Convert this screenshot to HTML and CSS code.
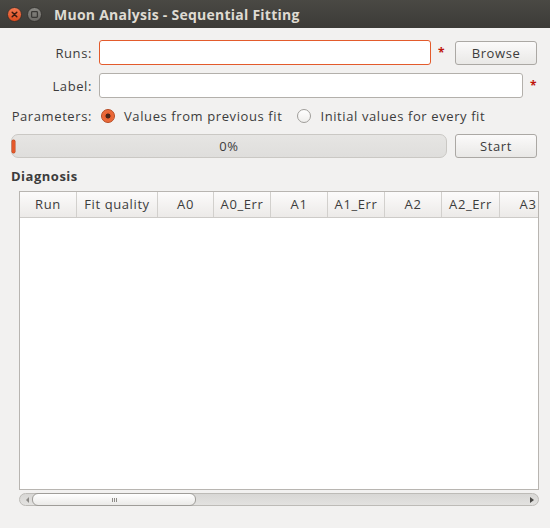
FILE: index.html
```html
<!DOCTYPE html>
<html>
<head>
<meta charset="utf-8">
<link rel="stylesheet" href="styles.css">
</head>
<body>
<div class="titlebar">
  <svg class="wbtn" width="15" height="15" viewBox="0 0 15 15">
    <defs>
      <linearGradient id="gc" x1="0" y1="0" x2="0" y2="1">
        <stop offset="0" stop-color="#f47a52"/>
        <stop offset="1" stop-color="#dd4a1c"/>
      </linearGradient>
    </defs>
    <circle cx="7.5" cy="7.5" r="7" fill="url(#gc)" stroke="#2d2c29" stroke-width="0.8"/>
    <path d="M5.2 5.2 L9.8 9.8 M9.8 5.2 L5.2 9.8" stroke="#3a1a10" stroke-width="1.5" stroke-linecap="round"/>
  </svg>
  <svg class="wbtn wmax" width="15" height="15" viewBox="0 0 15 15">
    <defs>
      <linearGradient id="gm" x1="0" y1="0" x2="0" y2="1">
        <stop offset="0" stop-color="#8a8984"/>
        <stop offset="1" stop-color="#6a6965"/>
      </linearGradient>
    </defs>
    <circle cx="7.5" cy="7.5" r="7" fill="url(#gm)" stroke="#2d2c29" stroke-width="0.8"/>
    <rect x="4.6" y="4.6" width="5.8" height="5.8" rx="0.8" fill="none" stroke="#3a3936" stroke-width="1.3"/>
  </svg>
  <span class="title">Muon Analysis - Sequential Fitting</span>
</div>

<div class="content">
  <div class="row r-runs">
    <span class="lbl">Runs:</span>
    <div class="input focus"></div>
    <span class="req">*</span>
    <button class="btn btn-browse">Browse</button>
  </div>
  <div class="row r-label">
    <span class="lbl">Label:</span>
    <div class="input"></div>
    <span class="req">*</span>
  </div>
  <div class="row r-params">
    <span class="lbl">Parameters:</span>
    <span class="radio checked"></span>
    <span class="rtext">Values from previous fit</span>
    <span class="radio second"></span>
    <span class="rtext">Initial values for every fit</span>
  </div>
  <div class="row r-progress">
    <div class="progress">
      <span class="chunk"></span>
      <span class="ptext">0%</span>
    </div>
    <button class="btn btn-start">Start</button>
  </div>

  <div class="group">
    <div class="group-title">Diagnosis</div>
    <div class="table">
      <div class="thead">
        <span class="th w57">Run</span>
        <span class="th w81">Fit quality</span>
        <span class="th w56">A0</span>
        <span class="th w57">A0_Err</span>
        <span class="th w57">A1</span>
        <span class="th w57">A1_Err</span>
        <span class="th w57">A2</span>
        <span class="th w58">A2_Err</span>
        <span class="th w57">A3</span>
      </div>
      <div class="tbody"></div>
    </div>
    <div class="hscroll">
      <span class="arrow-zone"><span class="arrow left"></span></span>
      <span class="thumb"><span class="grip"></span></span>
      <span class="trough"></span>
      <span class="arrow-zone"><span class="arrow right"></span></span>
    </div>
  </div>
</div>
</body>
</html>
```

FILE: styles.css
```css
* { box-sizing: border-box; }
html, body { margin: 0; padding: 0; }
body {
  width: 550px;
  height: 528px;
  overflow: hidden;
  background: #f2f1f0;
  font-family: "Open Sans", "DejaVu Sans", sans-serif;
  font-size: 13px;
  letter-spacing: 0.6px;
  color: #3c3c3c;
}

.titlebar {
  height: 28px;
  background: linear-gradient(#4a4944, #3c3b37);
  display: flex;
  align-items: center;
  padding-left: 7px;
}
.wbtn { flex: none; display: block; }
.wmax { margin-left: 5px; }
.title {
  margin-left: 12px;
  color: #dfdbd2;
  font-weight: bold;
  font-size: 14px;
  letter-spacing: 0.25px;
}

.content {
  padding: 12px 13px 0 11px;
  display: flex;
  flex-direction: column;
}
.row { display: flex; align-items: center; }
.r-runs { height: 25px; }
.r-label { height: 25px; margin-top: 8px; }
.r-params { height: 20px; margin-top: 8px; }
.r-progress { height: 24px; margin-top: 8px; }

.lbl { flex: none; width: 81px; text-align: right; white-space: nowrap; }
.input {
  flex: 1;
  height: 25px;
  margin-left: 7px;
  background: #fff;
  border: 1px solid #b3b0ab;
  border-radius: 3px;
}
.input.focus { border-color: #e35b2c; }
.req {
  flex: none;
  width: 7px;
  margin-left: 7px;
  color: #c0150b;
  font-weight: bold;
  font-size: 12px;
  letter-spacing: 0;
}
.btn {
  flex: none;
  width: 82px;
  height: 24px;
  padding: 0;
  border: 1px solid #aba8a4;
  border-radius: 3px;
  background: linear-gradient(#fbfafa, #e9e8e6);
  font: inherit;
  letter-spacing: 0.6px;
  color: #3c3c3c;
}
.btn-browse { margin-left: 10px; }
.btn-start { margin-left: 8px; }

.radio {
  flex: none;
  width: 14px;
  height: 14px;
  margin-left: 9px;
  border-radius: 50%;
  border: 1px solid #a09e9a;
  background: linear-gradient(#ffffff, #efeeec);
}
.radio.checked {
  border-color: #b6471d;
  background: radial-gradient(circle, #4b2518 0 2.2px, #e8602f 2.8px, #f07a4c 100%);
}
.radio.second { margin-left: 15px; }
.rtext { margin-left: 9px; white-space: nowrap; }

.progress {
  flex: 1;
  height: 24px;
  border: 1px solid #cac8c4;
  border-radius: 7px;
  background: linear-gradient(#e6e5e3, #dfdedc);
  display: grid;
  align-items: center;
}
.chunk {
  grid-area: 1 / 1;
  justify-self: start;
  width: 3px;
  height: 13px;
  border-radius: 1.5px;
  background: #e4582a;
  box-shadow: 0 0 0 0.5px #b9461f;
}
.ptext { grid-area: 1 / 1; justify-self: center; }

.group { margin-top: 10px; }
.group-title { font-weight: bold; line-height: 16px; height: 16px; letter-spacing: 0.5px; }
.table {
  margin-top: 7px;
  margin-left: 8px;
  width: 520px;
  height: 299px;
  border: 1px solid #b8b5b1;
  background: #fff;
  overflow: hidden;
}
.thead {
  display: flex;
  height: 26px;
  border-bottom: 1px solid #cdcbc8;
  background: linear-gradient(#fcfbfb, #eceae8);
}
.th {
  flex: none;
  text-align: center;
  line-height: 25px;
  border-right: 1px solid #d2d0cd;
  white-space: nowrap;
  overflow: hidden;
}
.w56 { width: 56px; }
.w57 { width: 57px; }
.w58 { width: 58px; }
.w81 { width: 81px; }

.hscroll {
  margin-top: 3px;
  margin-left: 8px;
  width: 520px;
  height: 13px;
  border: 1px solid #bdbbb7;
  border-radius: 7px;
  background: linear-gradient(#d8d7d5, #e3e2e0);
  display: flex;
  align-items: stretch;
}
.arrow-zone {
  flex: none;
  width: 12px;
  display: flex;
  align-items: center;
  justify-content: center;
}
.arrow { width: 0; height: 0; border-top: 3px solid transparent; border-bottom: 3px solid transparent; }
.arrow.left { border-right: 3px solid #8b8986; margin-left: 2px; }
.arrow.right { border-left: 4px solid #4a4946; }
.thumb {
  flex: none;
  width: 164px;
  margin: -1px 0;
  border: 1px solid #9f9d99;
  border-radius: 6px;
  background: linear-gradient(#ffffff, #ebeae8);
  display: flex;
  align-items: center;
  justify-content: center;
}
.grip {
  width: 5px;
  height: 4px;
  background: linear-gradient(90deg, #8e8c88 0 1px, transparent 1px 2px, #8e8c88 2px 3px, transparent 3px 4px, #8e8c88 4px 5px);
}
.trough { flex: 1; }
```
